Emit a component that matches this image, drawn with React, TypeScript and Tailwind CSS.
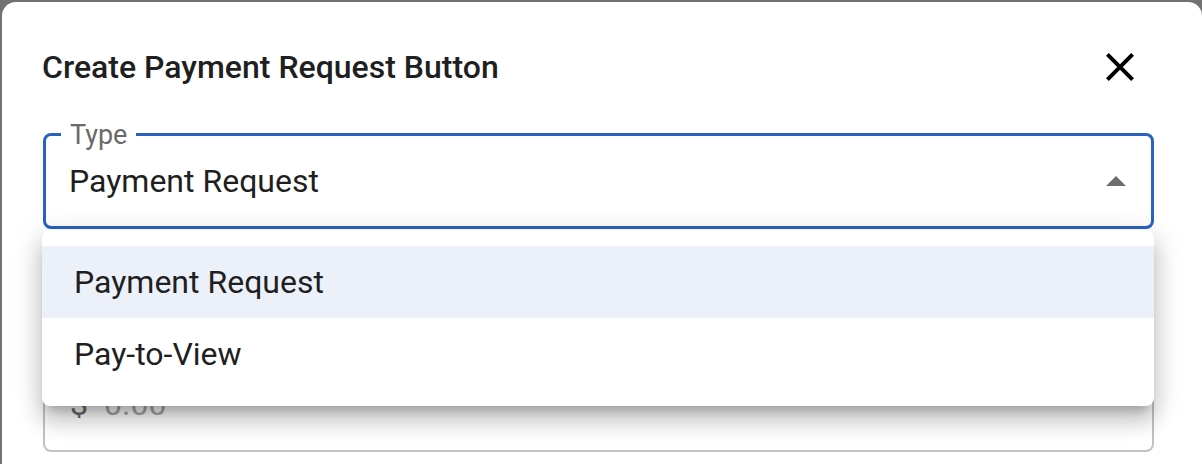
import React from "react";

const font = { fontFamily: "Roboto, 'Noto Sans', Arial, sans-serif" };

function CloseIcon() {
  return (
    <svg width="48" height="48" viewBox="0 0 24 24" className="block">
      <path
        d="M19 6.41 17.59 5 12 10.59 6.41 5 5 6.41 10.59 12 5 17.59 6.41 19 12 13.41 17.59 19 19 17.59 13.41 12z"
        fill="#000"
      />
    </svg>
  );
}

function ArrowUp() {
  return (
    <svg width="20" height="10" viewBox="0 0 20 10" className="block">
      <polygon points="0,10 10,0 20,10" fill="#6e6e6e" />
    </svg>
  );
}

export default function App() {
  const options = ["Payment Request", "Pay-to-View"];
  return (
    <div
      className="w-[1202px] h-[464px] overflow-hidden bg-[#727272] pl-[2px] pt-[2px]"
      style={font}
    >
      <div className="w-[1200px] h-[480px] bg-white rounded-[14px] pl-[41px] pr-[48px] pt-[41px]">
        {/* header */}
        <div className="flex items-center justify-between h-[48px] pr-[10px]">
          <h2 className="-ml-[1px] text-[32px] leading-[48px] font-medium text-[#1f1f1f]">
            Create Payment Request Button
          </h2>
          <CloseIcon />
        </div>

        {/* type select, open */}
        <div className="relative mt-[42px]">
          <div className="relative h-[96px] border-[3px] border-[#2a62c2] rounded-[8px] flex items-center pl-[23px] pr-[25px]">
            <span className="absolute left-[15px] -top-[15px] bg-white px-[9px] text-[27px] leading-[28px] text-[#6a6a6a]">
              Type
            </span>
            <span className="flex-1 text-[32px] leading-[48px] text-[#1f1f1f]">
              Payment Request
            </span>
            <ArrowUp />
          </div>

          <ul className="absolute z-10 left-[-1px] right-0 top-[97px] bg-white rounded-[8px] py-[16px] shadow-[0px_10px_10px_-6px_rgba(0,0,0,0.2),0px_16px_20px_2px_rgba(0,0,0,0.14),0px_6px_28px_4px_rgba(0,0,0,0.12)]">
            {options.map((o, i) => (
              <li
                key={o}
                className={
                  "h-[72px] flex items-center px-[32px] text-[32px] leading-[48px] text-[#1f1f1f] " +
                  (i === 0 ? "bg-[#ecf1f9]" : "bg-white")
                }
              >
                {o}
              </li>
            ))}
          </ul>
        </div>

        {/* amount field */}
        <div className="mt-[127px] h-[96px] border-2 border-[#c2c2c2] rounded-[8px] flex items-center pl-[25px]">
          <span className="text-[32px] leading-[48px] text-[#6a6a6a]">$</span>
          <span className="ml-[16px] text-[32px] leading-[48px] text-[#a8a8a8]">0.00</span>
        </div>
      </div>
    </div>
  );
}
